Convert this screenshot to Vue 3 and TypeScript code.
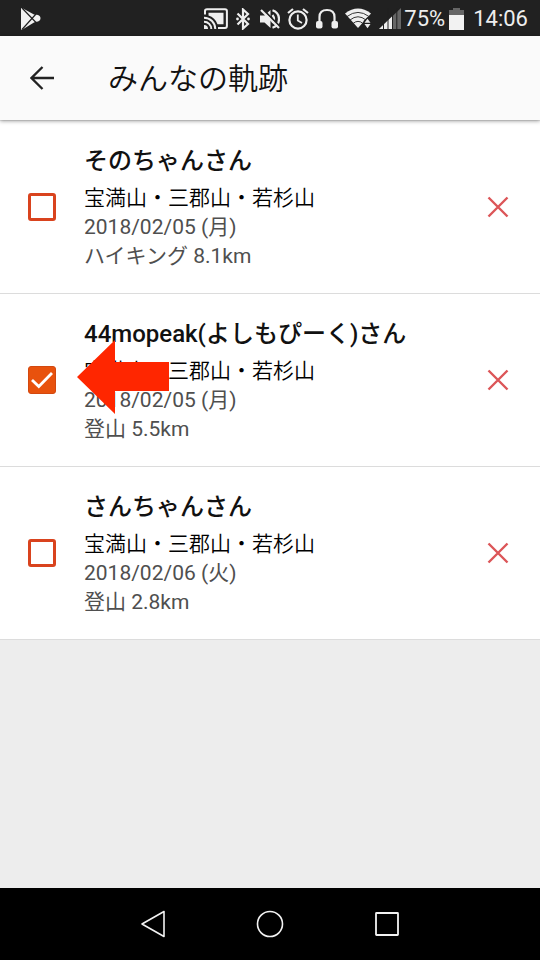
<script setup lang="ts">
import { ref } from 'vue'

interface Track {
  id: number
  user: string
  route: string
  date: string
  activity: string
  checked: boolean
  pointed: boolean
}

const tracks = ref<Track[]>([
  { id: 1, user: 'そのちゃんさん', route: '宝満山・三郡山・若杉山', date: '2018/02/05 (月)', activity: 'ハイキング 8.1km', checked: false, pointed: false },
  { id: 2, user: '44mopeak(よしもぴーく)さん', route: '宝満山・三郡山・若杉山', date: '2018/02/05 (月)', activity: '登山 5.5km', checked: true, pointed: true },
  { id: 3, user: 'さんちゃんさん', route: '宝満山・三郡山・若杉山', date: '2018/02/06 (火)', activity: '登山 2.8km', checked: false, pointed: false },
])

function remove(id: number): void {
  tracks.value = tracks.value.filter((t) => t.id !== id)
}
</script>

<template>
  <div class="screen">
    <div class="status">
      <svg class="play" width="22" height="24" viewBox="0 0 22 24">
        <path d="M1 1.500 Q1 0.500 2.500 1.200 L14 7.500 Q15.500 8 17 7.800 Q20.500 8.500 20.500 11.200 Q20.500 14 17 14.700 Q15.500 14.500 14 15.500 L2.500 22.500 Q1 23.200 1 22 Z" fill="#f2f2f2" />
        <path d="M2 1 L16 15.500 M2 22.500 L16 7" stroke="#212121" stroke-width="1.200" fill="none" />
      </svg>
      <div class="icons">
        <!-- cast -->
        <svg width="24" height="22" viewBox="0 0 24 22">
          <path d="M1 6.500 V3 Q1 1.200 3 1.200 H21 Q22.900 1.200 22.900 3 V18 Q22.900 19.900 21 19.900 H14" fill="none" stroke="#eee" stroke-width="2" />
          <path d="M4.500 4.800 H19.500 V16.200 H13.500 Q11 9.500 4.500 7.500 Z" fill="#eee" />
          <path d="M0 17 A4 4 0 0 1 4 21 H0 Z" fill="#eee" />
          <path d="M0 13.700 A7.300 7.300 0 0 1 7.300 21 M0 9.700 A11.300 11.300 0 0 1 11.300 21" fill="none" stroke="#eee" stroke-width="2" />
        </svg>
        <!-- bluetooth -->
        <svg width="18" height="22" viewBox="0 0 18 22">
          <path d="M2.500 5.500 L13 16 L8 20.500 V1.500 L13 6 L2.500 16.500" fill="none" stroke="#eee" stroke-width="2.200" />
          <circle cx="2.500" cy="11" r="1.400" fill="#eee" /><circle cx="13.500" cy="11" r="1.400" fill="#eee" />
        </svg>
        <!-- muted -->
        <svg width="20" height="22" viewBox="0 0 20 22">
          <path d="M0 7.500 H4.500 L10.500 2 V20 L4.500 14.500 H0 Z" fill="#eee" />
          <path d="M12.500 7 Q15.500 11 12.500 15 M12.500 2.200 Q19 4.500 19 11 Q19 17.500 12.500 19.800" fill="none" stroke="#eee" stroke-width="2.200" />
          <path d="M2.500 1 L20 18.500" stroke="#212121" stroke-width="1.800" />
          <path d="M1 2 L19 20" stroke="#eee" stroke-width="2.200" />
        </svg>
        <!-- alarm -->
        <svg width="22" height="22" viewBox="0 0 22 22">
          <circle cx="11" cy="12" r="8.600" fill="none" stroke="#eee" stroke-width="2.200" />
          <path d="M1 5 L6 1 M21 5 L16 1" stroke="#eee" stroke-width="2.200" />
          <path d="M10.800 6.500 V12.500 L15 15" fill="none" stroke="#eee" stroke-width="1.800" />
        </svg>
        <!-- headphones -->
        <svg width="22" height="22" viewBox="0 0 22 22">
          <path d="M3.500 14 V9 Q3.500 2 11 2 Q18.500 2 18.500 9 V14" fill="none" stroke="#eee" stroke-width="2.200" />
          <rect x="0" y="13" width="6.500" height="7.500" rx="2" fill="#eee" />
          <rect x="15.500" y="13" width="6.500" height="7.500" rx="2" fill="#eee" />
        </svg>
        <!-- wifi -->
        <svg width="27" height="22" viewBox="0 0 27 22">
          <path d="M0 5.500 Q13 -4.500 26 5.500 L13 20 Z" fill="#eee" />
          <path d="M2 8.500 Q13 0.300 24 8.500 M5 12 Q13 5.500 21 12 M8 15.500 Q13 11.200 18 15.500" fill="none" stroke="#212121" stroke-width="0.900" />
          <path d="M18.500 22 V13 L22.500 9 L27 13 V22 Z" fill="#212121" />
          <path d="M22.500 10.800 L25.500 14.800 H19.500 Z M19.500 16 H25.500 L22.500 20.200 Z" fill="#eee" />
        </svg>
        <!-- signal -->
        <svg width="22" height="22" viewBox="0 0 22 22">
          <path d="M0 21 L22 0 V21 Z" fill="#666" />
          <path d="M0 21 L13.500 8 V21 Z" fill="#eee" />
          <path d="M4.500 0 V22 M9 0 V22 M13.500 0 V22 M17.800 0 V22" stroke="#212121" stroke-width="1" />
        </svg>
      </div>
      <span class="percent">75%</span>
      <svg class="battery" width="16" height="22" viewBox="0 0 16 22">
        <path d="M4 0 H11 V2 H15 V8 H0 V2 H4 Z" fill="#666" />
        <path d="M0 7 H15 V22 H0 Z" fill="#f2f2f2" />
      </svg>
      <time class="clock">14:06</time>
    </div>

    <header class="bar">
      <button class="icon-button back" type="button" aria-label="戻る">
        <svg width="24" height="24" viewBox="0 0 24 24">
          <path d="M24 12 H2 M12.500 1 L1.500 12 L12.500 23" fill="none" stroke="#222" stroke-width="2.300" />
        </svg>
      </button>
      <h1>みんなの軌跡</h1>
    </header>

    <main class="content">
      <ul class="list">
        <li v-for="track in tracks" :key="track.id" class="row">
          <span class="check">
            <input :id="`track-${track.id}`" v-model="track.checked" type="checkbox" />
            <svg v-if="track.checked" width="28" height="28" viewBox="0 0 28 28">
              <path d="M4 14 L10.800 20.500 L24 7" fill="none" stroke="#fff" stroke-width="2.800" />
            </svg>
          </span>
          <label class="text" :for="`track-${track.id}`">
            <strong class="user">{{ track.user }}</strong>
            <span class="route">{{ track.route }}</span>
            <span class="detail">{{ track.date }}</span>
            <span class="detail">{{ track.activity }}</span>
          </label>
          <button class="icon-button" type="button" aria-label="削除" @click="remove(track.id)">
            <svg width="22" height="22" viewBox="0 0 22 22">
              <path d="M1.500 1.500 L20.500 20.500 M20.500 1.500 L1.500 20.500" stroke="#dc5558" stroke-width="2.400" />
            </svg>
          </button>
          <svg v-if="track.pointed" class="pointer" width="92" height="74" viewBox="0 0 92 74">
            <path d="M0 37 L38 0 V22 H92 V51 H38 V74 Z" fill="#ff2600" />
          </svg>
        </li>
      </ul>
    </main>

    <nav class="nav">
      <button class="icon-button" type="button" aria-label="戻る">
        <svg width="28" height="28" viewBox="0 0 28 28">
          <path d="M25 1.500 V26.500 L3 14 Z" fill="none" stroke="#f2f2f2" stroke-width="1.600" stroke-linejoin="round" />
        </svg>
      </button>
      <button class="icon-button" type="button" aria-label="ホーム">
        <svg width="28" height="28" viewBox="0 0 28 28">
          <circle cx="14" cy="14" r="12.500" fill="none" stroke="#f2f2f2" stroke-width="1.600" />
        </svg>
      </button>
      <button class="icon-button" type="button" aria-label="履歴">
        <svg width="28" height="28" viewBox="0 0 28 28">
          <rect x="3" y="3" width="22" height="22" rx="0.500" fill="none" stroke="#f2f2f2" stroke-width="1.800" />
        </svg>
      </button>
    </nav>
  </div>
</template>

<style>
body {
  margin: 0;
}
</style>

<style scoped>
.screen {
  display: flex;
  flex-direction: column;
  min-height: 100vh;
  background: #ededed;
  font-family: Roboto, "Noto Sans CJK JP", sans-serif;
  color: #111;
}
svg {
  display: block;
  flex: none;
}
.status {
  display: flex;
  align-items: center;
  height: 36px;
  padding: 2px 12px 0 20px;
  box-sizing: border-box;
  background: #212121;
  color: #eee;
  font-size: 22px;
  line-height: 34px;
}
.icons {
  display: flex;
  gap: 7px;
  margin-left: auto;
}
.percent {
  margin-left: 3px;
}
.battery {
  margin-left: 4px;
}
.clock {
  margin-left: 8px;
}
.icon-button {
  display: grid;
  place-items: center;
  flex: none;
  width: 48px;
  height: 48px;
  padding: 0;
  border: 0;
  background: none;
}
.bar {
  position: relative;
  z-index: 1;
  display: flex;
  align-items: center;
  gap: 42px;
  height: 84px;
  padding-left: 18px;
  background: #fafafa;
  box-shadow: 0 1px 4px rgba(0, 0, 0, 0.4);
}
.bar h1 {
  margin: 2px 0 0;
  font-size: 30px;
  font-weight: 350;
  line-height: 44px;
  color: #111;
}
.content {
  flex: 1;
  padding-top: 1px;
}
.list {
  margin: 0;
  padding: 0;
  list-style: none;
}
.row {
  position: relative;
  display: flex;
  align-items: center;
  padding: 22px 18px 22px 28px;
  border-bottom: 1px solid #dcdcdc;
  background: #fff;
}
.check {
  display: grid;
  flex: none;
}
.check > * {
  grid-area: 1 / 1;
}
.check svg {
  pointer-events: none;
}
.check input {
  appearance: none;
  box-sizing: border-box;
  width: 28px;
  height: 28px;
  margin: 0;
  border: 3px solid #d9431e;
  border-radius: 3px;
}
.check input:checked {
  border: 1px solid #d3480f;
  background: #e8520d;
}
.text {
  display: flex;
  flex: 1;
  flex-direction: column;
  min-width: 0;
  padding-left: 28px;
}
.user {
  margin-bottom: 5px;
  font-size: 24px;
  font-weight: 500;
  line-height: 36px;
}
.route,
.detail {
  font-size: 21px;
  line-height: 29px;
}
.route {
  font-weight: 350;
  color: #000;
}
.detail {
  font-weight: 400;
  color: #4f4f4f;
}
.pointer {
  position: absolute;
  top: 46px;
  left: 77px;
  pointer-events: none;
}
.nav {
  display: flex;
  align-items: center;
  justify-content: center;
  gap: 69px;
  height: 72px;
  background: #000;
}
</style>
